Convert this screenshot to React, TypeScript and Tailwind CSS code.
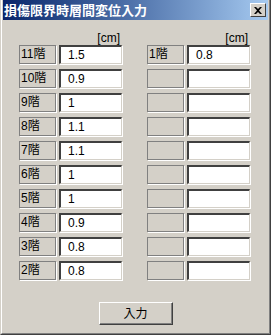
const leftRows: [string, string][] = [
  ['11階', '1.5'],
  ['10階', '0.9'],
  ['9階', '1'],
  ['8階', '1.1'],
  ['7階', '1.1'],
  ['6階', '1'],
  ['5階', '1'],
  ['4階', '0.9'],
  ['3階', '0.8'],
  ['2階', '0.8'],
];

const rightRows: [string, string][] = [
  ['1階', '0.8'],
  ['', ''],
  ['', ''],
  ['', ''],
  ['', ''],
  ['', ''],
  ['', ''],
  ['', ''],
  ['', ''],
  ['', ''],
];

function Row({ label, value }: { label: string; value: string }) {
  return (
    <div className="flex items-stretch h-[19px] gap-[3px]">
      <div className="w-[37px] border border-[#808080] shadow-[1px_1px_0_#ffffff] pl-[1px] pt-[1px] text-[12px] leading-[14px] text-black">
        {label}
      </div>
      <div className="w-[63px] border-t-2 border-l-2 border-t-[#404040] border-l-[#404040] border-r border-b border-r-[#d4d0c8] border-b-[#d4d0c8] shadow-[1px_1px_0_#ffffff] bg-white pl-[7px] pt-[1px] text-[12px] leading-[14px] text-black">
        {value}
      </div>
    </div>
  );
}

function Column({ rows }: { rows: [string, string][] }) {
  return (
    <div className="flex flex-col w-[103px]">
      <div className="h-[14px] text-right pr-[2px] text-[12px] leading-[14px] text-black">[cm]</div>
      <div className="flex flex-col gap-[5px]">
        {rows.map(([l, v], i) => (
          <Row key={i} label={l} value={v} />
        ))}
      </div>
    </div>
  );
}

export default function App() {
  return (
    <div
      className="w-[271px] h-[335px] bg-[#d4d0c8] flex flex-col border-l border-l-[#d4d0c8] border-r border-r-[#404040] border-b border-b-[#404040] overflow-hidden"
      style={{ fontFamily: '"Liberation Sans", "Noto Sans CJK JP", sans-serif' }}
    >
      <div className="flex-1 flex flex-col border-l border-l-white border-r border-r-[#808080] border-b border-b-[#808080] pl-[1px] pr-[1px]">
        <div className="h-[20px] flex items-center justify-between bg-gradient-to-r from-[#0a246a] to-[#a6caf0] pl-[1px] pr-[2px]">
          <span className="text-white font-bold text-[13px] leading-[15px]">損傷限界時層間変位入力</span>
          <div className="w-[16px] h-[14px] bg-[#d4d0c8] border border-t-white border-l-white border-r-[#404040] border-b-[#404040] flex items-center justify-center">
            <svg width="8" height="7" viewBox="0 0 8 7">
              <path d="M0 0h2l2 2 2-2h2L5 3.5 8 7H6L4 5 2 7H0l3-3.5z" fill="#000" />
            </svg>
          </div>
        </div>
        <div className="flex pl-[16px] pt-[11px] gap-[25px]">
          <Column rows={leftRows} />
          <Column rows={rightRows} />
        </div>
        <div className="flex justify-center pt-[22px]">
          <button className="w-[74px] h-[23px] bg-[#d4d0c8] border border-t-white border-l-white border-r-[#404040] border-b-[#404040] shadow-[inset_-1px_-1px_0_#808080] text-[12px] leading-[14px] text-black">
            入力
          </button>
        </div>
      </div>
    </div>
  );
}
